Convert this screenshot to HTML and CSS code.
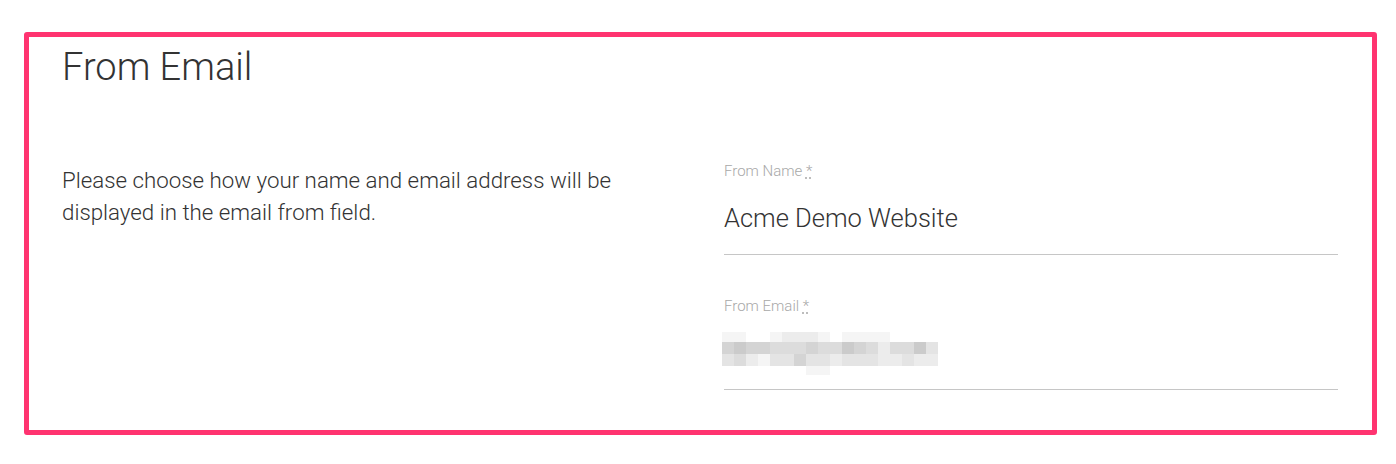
FILE: index.html
```html
<!DOCTYPE html>
<html lang="en">
<head>
<meta charset="utf-8">
<title>From Email</title>
<link rel="stylesheet" href="styles.css">
</head>
<body>
<section class="panel">
  <h2 class="panel-title">From Email</h2>
  <div class="panel-body">
    <p class="panel-desc">Please choose how your name and email address will be displayed in the email from field.</p>
    <div class="fields">
      <div class="field">
        <label class="field-label">From Name <abbr class="req" title="required">*</abbr></label>
        <div class="field-input">Acme Demo Website</div>
      </div>
      <div class="field">
        <label class="field-label">From Email <abbr class="req" title="required">*</abbr></label>
        <div class="field-input">
          <div class="pixelated" aria-label="redacted email">
            <i class="b"></i><i class="b"></i><i class="a"></i><i class="a"></i><i class="b"></i><i class="c"></i><i class="c"></i><i class="c"></i><i class="b"></i><i class="a"></i><i class="b"></i><i class="b"></i><i class="b"></i><i class="b"></i><i class="a"></i><i class="a"></i><i class="a"></i><i class="a"></i>
            <i class="f"></i><i class="g"></i><i class="f"></i><i class="f"></i><i class="e"></i><i class="e"></i><i class="e"></i><i class="f"></i><i class="e"></i><i class="e"></i><i class="g"></i><i class="f"></i><i class="e"></i><i class="c"></i><i class="e"></i><i class="e"></i><i class="g"></i><i class="d"></i>
            <i class="d"></i><i class="e"></i><i class="c"></i><i class="b"></i><i class="d"></i><i class="d"></i><i class="f"></i><i class="d"></i><i class="d"></i><i class="c"></i><i class="d"></i><i class="d"></i><i class="d"></i><i class="c"></i><i class="c"></i><i class="d"></i><i class="c"></i><i class="c"></i>
            <i class="a"></i><i class="a"></i><i class="a"></i><i class="a"></i><i class="a"></i><i class="a"></i><i class="a"></i><i class="b"></i><i class="b"></i><i class="a"></i><i class="a"></i><i class="a"></i><i class="a"></i><i class="a"></i><i class="a"></i><i class="a"></i><i class="a"></i><i class="a"></i>
          </div>
        </div>
      </div>
    </div>
  </div>
</section>
</body>
</html>
```
FILE: styles.css
```css
html, body {
  margin: 0;
  padding: 0;
  background: #ffffff;
}
body {
  font-family: Roboto, "Liberation Sans", sans-serif;
  font-weight: 300;
  color: #333333;
  padding: 32px 19px 0 24px;
}
.panel {
  box-sizing: border-box;
  height: 403px;
  border: 5px solid #ff3370;
  border-radius: 3px;
  padding: 7px 34px 0 33px;
}
.panel-title {
  margin: 0;
  font-size: 38px;
  font-weight: 300;
  line-height: 46px;
  color: #333333;
}
.panel-body {
  display: grid;
  grid-template-columns: 600px 1fr;
  column-gap: 62px;
  margin-top: 71px;
}
.panel-desc {
  margin: 3px 0 0;
  font-size: 22.3px;
  line-height: 32px;
  color: #333333;
}
.fields {
  display: flex;
  flex-direction: column;
  gap: 41px;
}
.field {
  display: flex;
  flex-direction: column;
  gap: 16px;
}
.field-label {
  font-size: 15px;
  line-height: 20px;
  color: #a8a8a8;
}
.req {
  text-decoration: underline dotted;
  text-underline-offset: 2px;
}
.field-input {
  font-size: 25.5px;
  line-height: 42px;
  height: 42px;
  padding-bottom: 15px;
  border-bottom: 1px solid #c6c6c6;
  color: #333333;
}
.pixelated {
  display: grid;
  grid-template-columns: repeat(18, 12px);
  grid-template-rows: 10px 12px 12px 9px;
  margin: 0 0 0 -2px;
}
.pixelated i { display: block; }
.pixelated .a { background: #ffffff; }
.pixelated .b { background: #f5f5f5; }
.pixelated .c { background: #ececec; }
.pixelated .d { background: #e4e4e4; }
.pixelated .e { background: #dcdcdc; }
.pixelated .f { background: #d4d4d4; }
.pixelated .g { background: #cbcbcb; }
```
